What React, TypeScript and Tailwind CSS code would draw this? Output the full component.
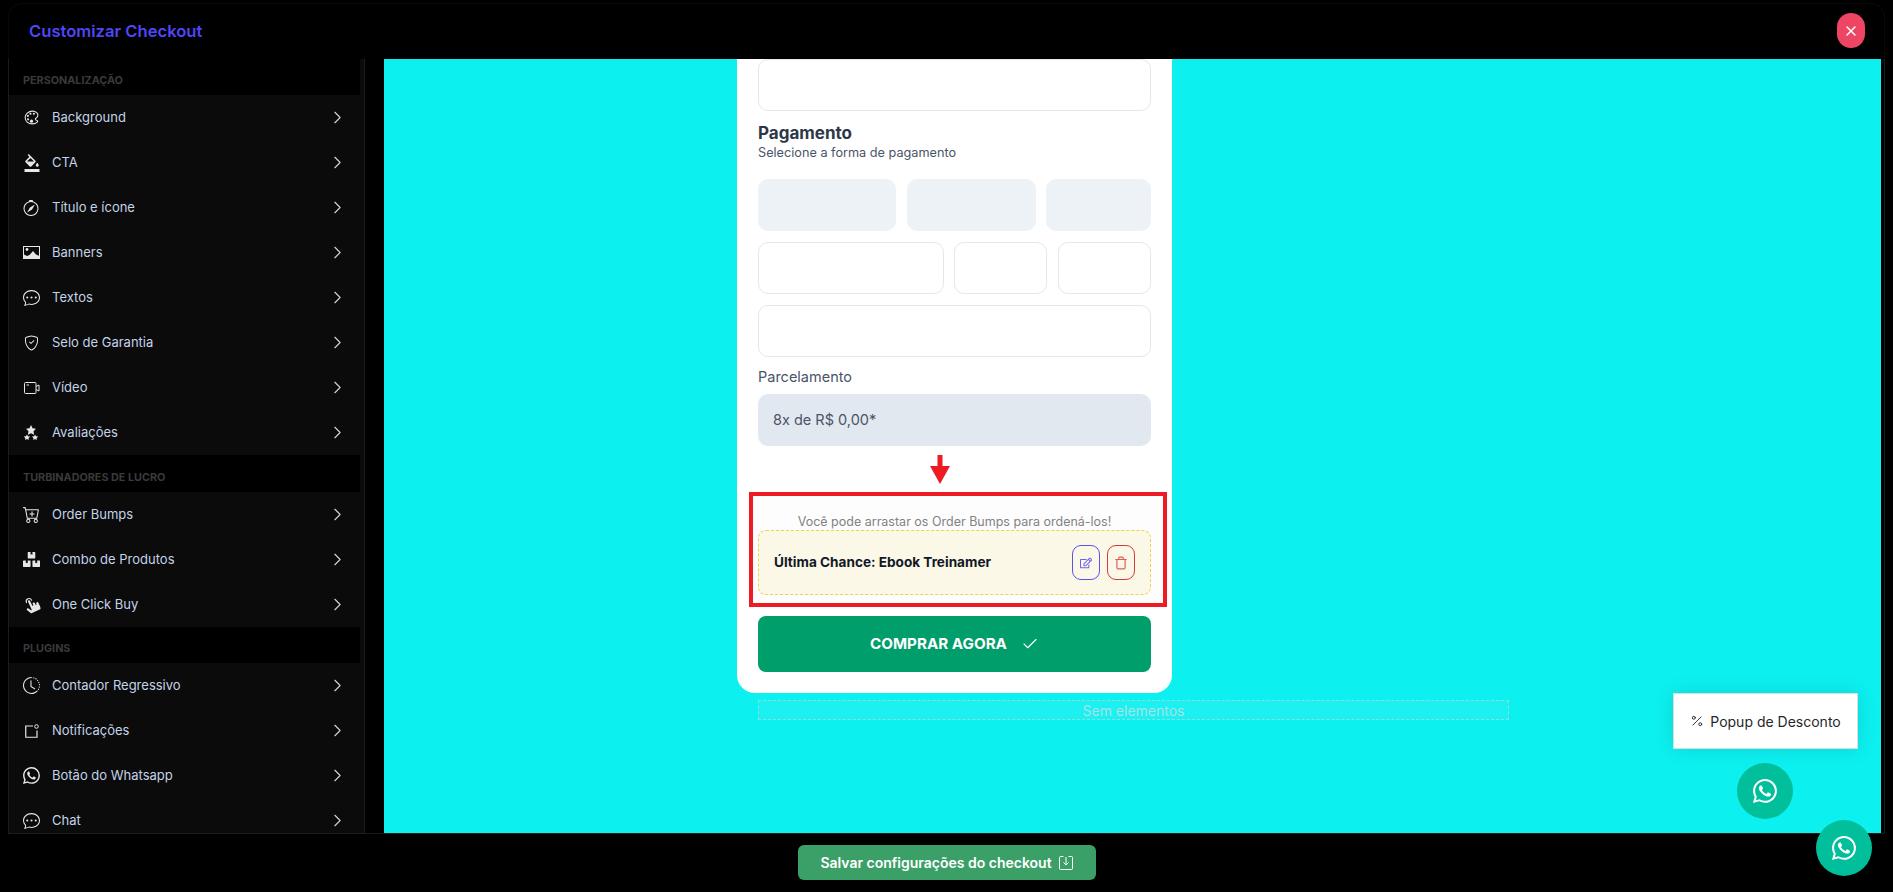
import React from "react";
import { ChevronRight, Percent, Check, X, Trash } from "lucide-react";
import { IoColorPaletteOutline } from "react-icons/io5";
import { MdFormatColorFill } from "react-icons/md";
import { BsCompass, BsChatDots, BsShieldCheck, BsCartPlus, BsClockHistory, BsWhatsapp } from "react-icons/bs";
import { FaBoxes, FaRegEdit } from "react-icons/fa";
import { PiHandTapFill } from "react-icons/pi";

const font = "font-['Inter','Liberation_Sans',sans-serif]";

type IconProps = { className?: string };

// these ones are not in the packages, drawn by hand
const StarsIcon = ({ className }: IconProps) => (
  <svg viewBox="0 0 24 24" fill="currentColor" className={className}>
    <polygon points="12,0 14.500,5.200 20,6 16,10 17,15.500 12,13 7,15.500 8,10 4,6 9.500,5.200" />
    <polygon points="5.500,15 7,18 10.500,18.500 8,21 8.500,24 5.500,22.500 2.500,24 3,21 0.500,18.500 4,18" />
    <polygon points="18.500,15 20,18 23.500,18.500 21,21 21.500,24 18.500,22.500 15.500,24 16,21 13.500,18.500 17,18" />
  </svg>
);

const BannerIcon = ({ className }: IconProps) => (
  <svg viewBox="0 0 17 13" className={className}>
    <rect x="0.500" y="0.500" width="16" height="12" fill="none" stroke="currentColor" />
    <circle cx="4" cy="3.500" r="1.400" fill="currentColor" />
    <path d="M1 12V8.500l3 1.500 2.500-1 3.500-4 3 3.500 3.500 1.500V12z" fill="currentColor" />
  </svg>
);

const VideoIcon = ({ className }: IconProps) => (
  <svg viewBox="0 0 16 12" fill="none" stroke="currentColor" className={className}>
    <rect x="0.500" y="0.500" width="11.500" height="11" rx="1" />
    <path d="M2.500 3H5" />
    <path d="M12 4.500l3-1.500v6l-3-1.500" />
  </svg>
);

const NotificationIcon = ({ className }: IconProps) => (
  <svg viewBox="0 0 14 14" fill="none" stroke="currentColor" className={className}>
    <path d="M8 2H0.750V13.250H12V6.500" strokeWidth="1.200" />
    <circle cx="11.500" cy="2.500" r="1.800" strokeWidth="1" />
  </svg>
);

const SaveIcon = ({ className }: IconProps) => (
  <svg viewBox="0 0 14 14" fill="none" stroke="currentColor" className={className}>
    <path d="M4.500 0.500H1.500a1 1 0 0 0-1 1v11a1 1 0 0 0 1 1h11a1 1 0 0 0 1-1v-11a1 1 0 0 0-1-1H9.500" />
    <path d="M7 1v8M4.500 6.500L7 9l2.500-2.500" />
  </svg>
);

type Item = { label: string; icon: React.ComponentType<IconProps>; iconClass?: string };

const sections: { title: string; titleClass: string; items: Item[] }[] = [
  {
    title: "PERSONALIZAÇÃO",
    titleClass: "h-[36px]",
    items: [
      { label: "Background", icon: IoColorPaletteOutline, iconClass: "w-[17px] h-[17px]" },
      { label: "CTA", icon: MdFormatColorFill, iconClass: "w-[18px] h-[18px]" },
      { label: "Título e ícone", icon: BsCompass, iconClass: "w-[16px] h-[16px]" },
      { label: "Banners", icon: BannerIcon, iconClass: "w-[17px] h-[13px]" },
      { label: "Textos", icon: BsChatDots, iconClass: "w-[17px] h-[17px]" },
      { label: "Selo de Garantia", icon: BsShieldCheck, iconClass: "w-[15px] h-[16px] ml-[1px]" },
      { label: "Vídeo", icon: VideoIcon, iconClass: "w-[16px] h-[12px] ml-[1px]" },
      { label: "Avaliações", icon: StarsIcon, iconClass: "w-[16px] h-[15px]" },
    ],
  },
  {
    title: "TURBINADORES DE LUCRO",
    titleClass: "h-[37px]",
    items: [
      { label: "Order Bumps", icon: BsCartPlus, iconClass: "w-[17px] h-[17px]" },
      { label: "Combo de Produtos", icon: FaBoxes, iconClass: "w-[17px] h-[17px]" },
      { label: "One Click Buy", icon: PiHandTapFill, iconClass: "w-[18px] h-[18px] -rotate-[25deg]" },
    ],
  },
  {
    title: "PLUGINS",
    titleClass: "h-[36px]",
    items: [
      { label: "Contador Regressivo", icon: BsClockHistory, iconClass: "w-[17px] h-[17px]" },
      { label: "Notificações", icon: NotificationIcon, iconClass: "w-[14px] h-[14px] ml-[2px]" },
      { label: "Botão do Whatsapp", icon: BsWhatsapp, iconClass: "w-[17px] h-[17px]" },
      { label: "Chat", icon: BsChatDots, iconClass: "w-[17px] h-[17px]" },
    ],
  },
];

const Sidebar = () => (
  <aside className="w-[357px] shrink-0 h-full overflow-hidden border-l border-r border-[#1c1c1c] bg-[#0b0b0b]">
    {sections.map((section) => (
      <div key={section.title}>
        <div className={`${section.titleClass} w-[351px] bg-black pl-[14px] pt-[9px] flex items-center text-[10.800px] font-bold text-[#3a3a3c]`}>
          {section.title}
        </div>
        {section.items.map((item) => (
          <div key={item.label} className="h-[45px] flex items-center pl-[14px] pr-[16px] text-[#c3d3e8]">
            <span className="w-[29px] shrink-0 flex items-center justify-start text-[#e5e7eb]">
              <item.icon className={item.iconClass} />
            </span>
            <span className="flex-1 text-[13px] font-normal">{item.label}</span>
            <ChevronRight className="w-[21px] h-[21px] text-[#d4d4d8]" strokeWidth={1.300} />
          </div>
        ))}
      </div>
    ))}
  </aside>
);

const Input = ({ className }: { className?: string }) => (
  <div className={`h-[52px] rounded-[10px] border border-[#e2e8f0] bg-white ${className ?? ""}`} />
);

const CheckoutCard = () => (
  <div className="w-[435px] shrink-0 bg-white rounded-b-[18px] px-[21px] pb-[21px] flex flex-col">
    <Input />
    <h2 className="mt-[11px] text-[17px] leading-[22px] font-bold text-[#2d3748]">Pagamento</h2>
    <p className="text-[12.700px] leading-[17px] text-[#4a5568]">Selecione a forma de pagamento</p>
    <div className="mt-[18px] flex">
      <div className="w-[138px] h-[52px] rounded-[10px] bg-[#edf2f7]" />
      <div className="ml-[11px] w-[129px] h-[52px] rounded-[10px] bg-[#edf2f7]" />
      <div className="ml-[10px] flex-1 h-[52px] rounded-[10px] bg-[#edf2f7]" />
    </div>
    <div className="mt-[11px] flex">
      <Input className="w-[186px]" />
      <Input className="ml-[10px] w-[93px]" />
      <Input className="ml-[11px] flex-1" />
    </div>
    <Input className="mt-[11px]" />
    <label className="mt-[7px] text-[14.500px] leading-[26px] text-[#4a5568]">Parcelamento</label>
    <div className="mt-[4px] h-[52px] rounded-[10px] bg-[#e2e8f0] flex items-center pl-[15px] text-[14.500px] text-[#4a5568]">
      8x de R$ 0,00*
    </div>
    <div className="h-[46px] flex justify-center items-start pt-[9px] pr-[30px]">
      <svg width="20" height="29" viewBox="0 0 20 29" className="text-[#ed1c24]" fill="currentColor">
        <rect x="7.500" y="0" width="5" height="12" />
        <polygon points="0,11 20,11 10,29" />
      </svg>
    </div>
    <div className="-ml-[9px] -mr-[16px] border-[4px] border-[#ed1c24] h-[115px] bg-[#fdfdfd] pl-[5px] pr-[12px] flex flex-col justify-end pb-[8px]">
      <p className="text-center text-[12.500px] leading-[17px] text-[#828282]">Você pode arrastar os Order Bumps para ordená-los!</p>
      <div className="h-[65px] rounded-[8px] border border-dashed border-[#ecd24f] bg-[#fcf8e8] flex items-center pl-[15px] pr-[15px]">
        <span className="flex-1 text-[13.600px] font-bold text-[#111827]">Última Chance: Ebook Treinamer</span>
        <button className="w-[28px] h-[35px] rounded-[9px] border border-[#5b51f0] text-[#6a60f5] flex items-center justify-center">
          <FaRegEdit className="w-[12px] h-[12px]" />
        </button>
        <button className="ml-[7px] w-[28px] h-[35px] rounded-[9px] border border-[#d13c3c] text-[#e05a5a] flex items-center justify-center">
          <Trash className="w-[14px] h-[14px]" />
        </button>
      </div>
    </div>
    <button className="mt-[9px] h-[56px] rounded-[8px] bg-[#009e6a] text-white flex items-center justify-center gap-[14px] text-[15.200px] font-bold">
      COMPRAR AGORA
      <Check className="w-[18px] h-[18px]" strokeWidth={1.500} />
    </button>
  </div>
);

export default function App() {
  return (
    <div className={`relative w-[1893px] h-[892px] overflow-hidden bg-black ${font}`}>
      <div className="pt-[3px] mx-[8px]">
        <header className="h-[56px] pl-[20px] flex items-center text-[16.600px] font-semibold text-[#4f46f5] border-t border-l border-r border-[#090909] rounded-t-[14px]">
          Customizar Checkout
        </header>
      </div>
      <button className="absolute top-[13px] left-[1837px] w-[28px] h-[35px] rounded-[14px] bg-[#ef4565] text-white flex items-center justify-center">
        <X className="w-[16px] h-[16px]" strokeWidth={2.200} />
      </button>

      <div className="h-[774px] mx-[8px] flex border-r border-[#1c1c1c]">
        <Sidebar />
        <main className="ml-[19px] mr-[3px] flex-1 bg-[#0df0f0] overflow-hidden flex flex-col pl-[353px]">
          <CheckoutCard />
          <div className="mt-[7px] ml-[21px] w-[751px] h-[20px] shrink-0 border border-dashed border-[#8fdcdc] bg-[#1df0f0] flex items-center justify-center text-[14px] text-[#a5e3e6]">
            Sem elementos
          </div>
        </main>
      </div>
      <div className="h-[59px] border-t-[1px] border-[#1c1c1c] mx-[8px] flex justify-center pt-[11px]">
        <button className="w-[298px] h-[35px] rounded-[6px] bg-[#3ba068] text-white flex items-center justify-center gap-[7px] text-[14px] font-semibold">
          Salvar configurações do checkout
          <SaveIcon className="w-[14px] h-[14px]" />
        </button>
      </div>

      <div className="absolute left-[1673px] top-[693px] w-[185px] h-[56px] bg-white border border-[#dddddd] shadow-[0_0_20px_rgba(0,0,0,0.12)] flex items-center justify-center gap-[6px] text-[14px] text-[#27272a]">
        <Percent className="w-[14px] h-[14px]" strokeWidth={1.600} />
        Popup de Desconto
      </div>
      <div className="absolute left-[1737px] top-[763px] w-[56px] h-[56px] rounded-full bg-[#00bf9a] text-white flex items-center justify-center">
        <BsWhatsapp className="w-[24px] h-[24px]" />
      </div>
      <div className="absolute left-[1816px] top-[820px] w-[56px] h-[56px] rounded-full bg-[#00bf9a] text-white flex items-center justify-center">
        <BsWhatsapp className="w-[24px] h-[24px]" />
      </div>
    </div>
  );
}
